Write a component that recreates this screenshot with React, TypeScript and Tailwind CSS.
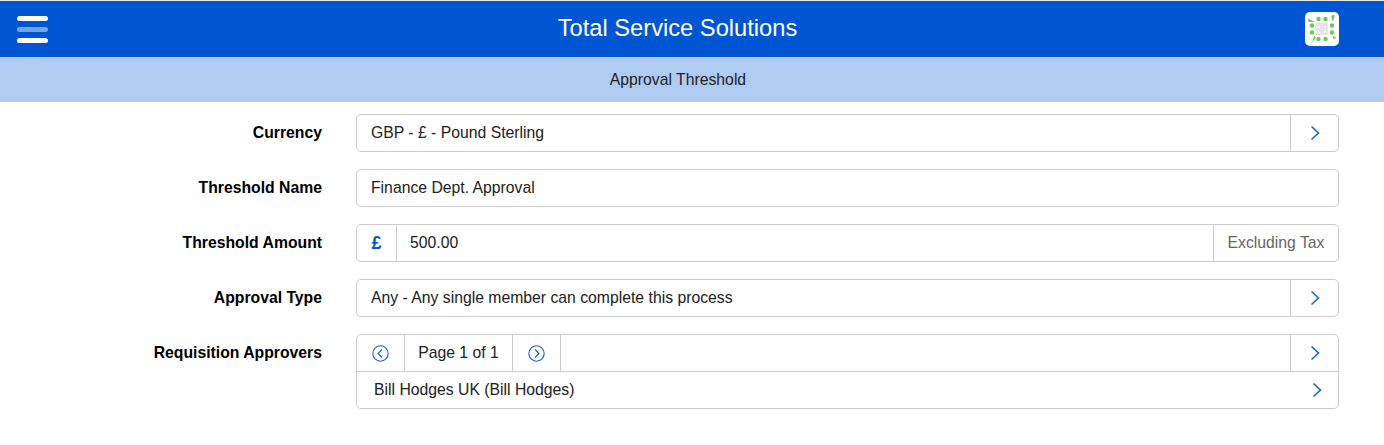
const Chevron = () => (
  <svg width="10" height="16" viewBox="0 0 10 16" fill="none" stroke="#1a5fd6" strokeWidth="1.6">
    <path d="M1.5 1.5 8.5 8l-7 6.5" />
  </svg>
);

const CircleArrow = ({ dir }: { dir: "left" | "right" }) => (
  <svg width="17" height="17" viewBox="0 0 17 17" fill="none" stroke="#1a5fd6" strokeWidth="1.1">
    <circle cx="8.5" cy="8.5" r="7.7" />
    <path d={dir === "left" ? "M10 4.5 6 8.5l4 4" : "M7 4.5l4 4-4 4"} />
  </svg>
);

const Logo = () => (
  <div className="w-[34px] h-[34px] rounded-[5px] bg-white flex items-center justify-center">
    <svg width="28" height="28" viewBox="0 0 28 28">
      <rect x="7.500" y="8" width="12.500" height="12" fill="#e4e4e4" />
      <path d="M10 11h3l-3 2.500zM18 11h-3l3 2.500zM10 17.500h3l-3-2.500zM18 17.500h-3l3-2.500z" fill="#fff" />
      <g fill="#6cc95c">
        <circle cx="10.500" cy="4" r="2.200" />
        <circle cx="17.500" cy="4" r="2.200" />
        <circle cx="10.500" cy="24" r="2.200" />
        <circle cx="17.500" cy="24" r="2.200" />
        <circle cx="4" cy="10.500" r="2.200" />
        <circle cx="4" cy="17.500" r="2.200" />
        <circle cx="24" cy="10.500" r="2.200" />
        <circle cx="24" cy="17.500" r="2.200" />
        <path d="M0 3.500l7 3.500-6.500 0zM23 0.500l4-0.500-2 7zM4 28l2-7 2 1.500zM25 21l5 2.500-5 0z" />
      </g>
    </svg>
  </div>
);

const Label = ({ children }: { children: string }) => (
  <div className="w-[322px] shrink-0 text-right font-bold text-black">{children}</div>
);

const Row = ({ label, children }: { label: string; children: React.ReactNode }) => (
  <div className="flex items-center h-[38px]">
    <Label>{label}</Label>
    <div className="ml-[34px] w-[983px] h-full flex border border-[#cccccc] rounded-[5px]">{children}</div>
  </div>
);

const SelectRow = ({ label, value }: { label: string; value: string }) => (
  <Row label={label}>
    <div className="flex-1 flex items-center px-[14px] text-[#212121]">{value}</div>
    <div className="w-[48px] border-l border-[#cccccc] flex items-center justify-center">
      <Chevron />
    </div>
  </Row>
);

export default function App() {
  return (
    <div className="w-[1384px] h-[445px] bg-white overflow-hidden font-['Liberation_Sans',Arial,sans-serif] text-[15.75px]">
      <div className="h-px bg-[#e9e9e9]" />
      <header className="h-[56px] bg-[#0056d2] flex items-center justify-between pl-[17px] pr-[45px]">
        <div className="w-[31px] flex flex-col gap-[6px]">
          <div className="h-[5px] rounded-full bg-white" />
          <div className="h-[5px] rounded-full bg-white/45" />
          <div className="h-[5px] rounded-full bg-white" />
        </div>
        <h1 className="text-[23.7px] text-white ml-[2px] -mt-[1px]">Total Service Solutions</h1>
        <Logo />
      </header>
      <div className="h-[45px] bg-[#b0cbf2] flex items-center justify-center text-[#212121]">
        <span className="-ml-[28px]">Approval Threshold</span>
      </div>

      <div className="pt-3 flex flex-col gap-[17px]">
        <SelectRow label="Currency" value="GBP - £ - Pound Sterling" />
        <Row label="Threshold Name">
          <div className="flex-1 flex items-center px-[14px] text-[#212121]">Finance Dept. Approval</div>
        </Row>
        <Row label="Threshold Amount">
          <div className="w-[40px] border-r border-[#cccccc] flex items-center justify-center font-bold text-lg text-[#0056d2]">£</div>
          <div className="flex-1 flex items-center px-[13px] text-[#212121]">500.00</div>
          <div className="w-[125px] border-l border-[#cccccc] flex items-center justify-center text-[#666666]">Excluding Tax</div>
        </Row>
        <SelectRow label="Approval Type" value="Any - Any single member can complete this process" />

        <div className="flex items-start">
          <div className="h-[38px] flex items-center">
            <Label>Requisition Approvers</Label>
          </div>
          <div className="ml-[34px] w-[983px] border border-[#cccccc] rounded-[5px]">
            <div className="h-[37px] flex border-b border-[#cccccc]">
              <div className="w-[47px] flex items-center justify-center">
                <CircleArrow dir="left" />
              </div>
              <div className="w-[109px] border-x border-[#cccccc] flex items-center justify-center text-[#212121]">Page 1 of 1</div>
              <div className="w-[47px] flex items-center justify-center">
                <CircleArrow dir="right" />
              </div>
              <div className="flex-1 border-l border-[#cccccc]" />
              <div className="w-[48px] border-l border-[#cccccc] flex items-center justify-center">
                <Chevron />
              </div>
            </div>
            <div className="h-[36px] flex items-center justify-between pl-[17px] pr-[16px] text-[#212121]">
              <span>Bill Hodges UK (Bill Hodges)</span>
              <Chevron />
            </div>
          </div>
        </div>
      </div>
    </div>
  );
}
